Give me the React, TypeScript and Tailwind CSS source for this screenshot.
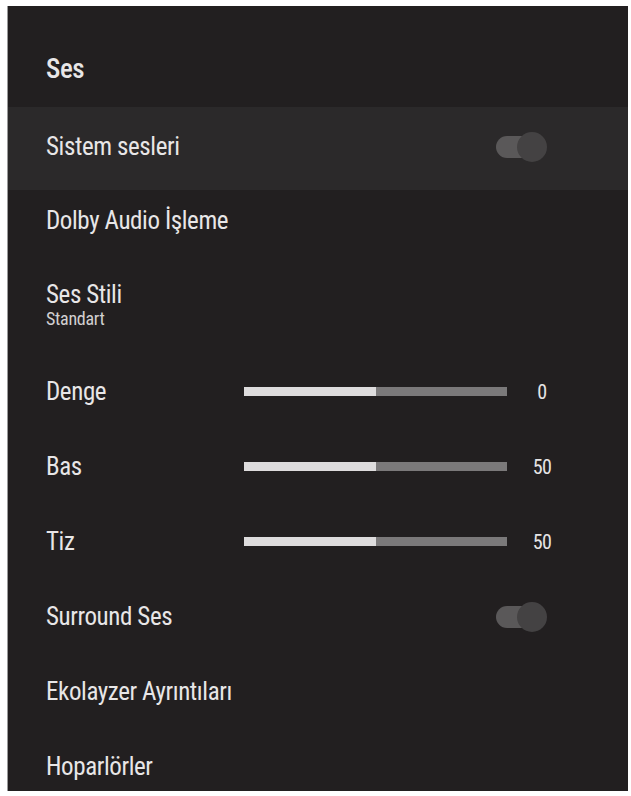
function Toggle() {
  return (
    <div className="relative h-[30px] w-[51px]">
      <div className="absolute left-0 top-[4px] h-[22px] w-[36px] rounded-full bg-[#5a5859]" />
      <div className="absolute right-0 top-0 h-[30px] w-[30px] rounded-full bg-[#444243]" />
    </div>
  )
}

function Slider({ value }: { value: string }) {
  return (
    <div className="flex items-center">
      <div className="flex h-[9px] w-[263px]">
        <div className="h-full w-1/2 bg-[#dedcdd]" />
        <div className="h-full w-1/2 bg-[#7b797a]" />
      </div>
      <span className="ml-[20px] w-[30px] text-center text-[20px] leading-none tracking-[-0.5px] text-[#e6e4e5]">
        {value}
      </span>
    </div>
  )
}

const sliders = [
  { label: "Denge", value: "0" },
  { label: "Bas", value: "50" },
  { label: "Tiz", value: "50" },
]

export default function App() {
  return (
    <div className="min-h-[796px] bg-white pb-[5px] pl-[7px] pr-[3px] pt-[6px] font-['Roboto_Condensed','Open_Sans',sans-serif]">
      <div className="h-[785px] overflow-hidden border-l border-[#9a9a9a] bg-[#221f20] text-[25px] leading-none tracking-[-0.4px] text-[#e8e6e7]">
        {/* Title */}
        <div className="flex h-[101px] items-center pl-[38px] pt-[25px] text-[27px] font-medium">
          Ses
        </div>

        {/* Focused row */}
        <div className="flex h-[83px] items-center justify-between bg-[#2b292a] pb-[4px] pl-[38px] pr-[81px]">
          <span>Sistem sesleri</span>
          <Toggle />
        </div>

        <div className="flex h-[60px] items-center pl-[38px]">Dolby Audio İşleme</div>

        <div className="flex h-[104px] flex-col justify-center pl-[38px] pt-[6px]">
          <span>Ses Stili</span>
          <span className="mt-[3px] text-[18px] leading-none tracking-[-0.3px] text-[#d2d0d1]">Standart</span>
        </div>

        {sliders.map((s) => (
          <div key={s.label} className="flex h-[75px] items-center pl-[38px]">
            <span className="w-[198px]">{s.label}</span>
            <Slider value={s.value} />
          </div>
        ))}

        <div className="flex h-[75px] items-center justify-between pl-[38px] pr-[81px]">
          <span>Surround Ses</span>
          <Toggle />
        </div>

        <div className="flex h-[75px] items-center pl-[38px]">Ekolayzer Ayrıntıları</div>
        <div className="flex h-[75px] items-center pl-[38px]">Hoparlörler</div>
      </div>
    </div>
  )
}
